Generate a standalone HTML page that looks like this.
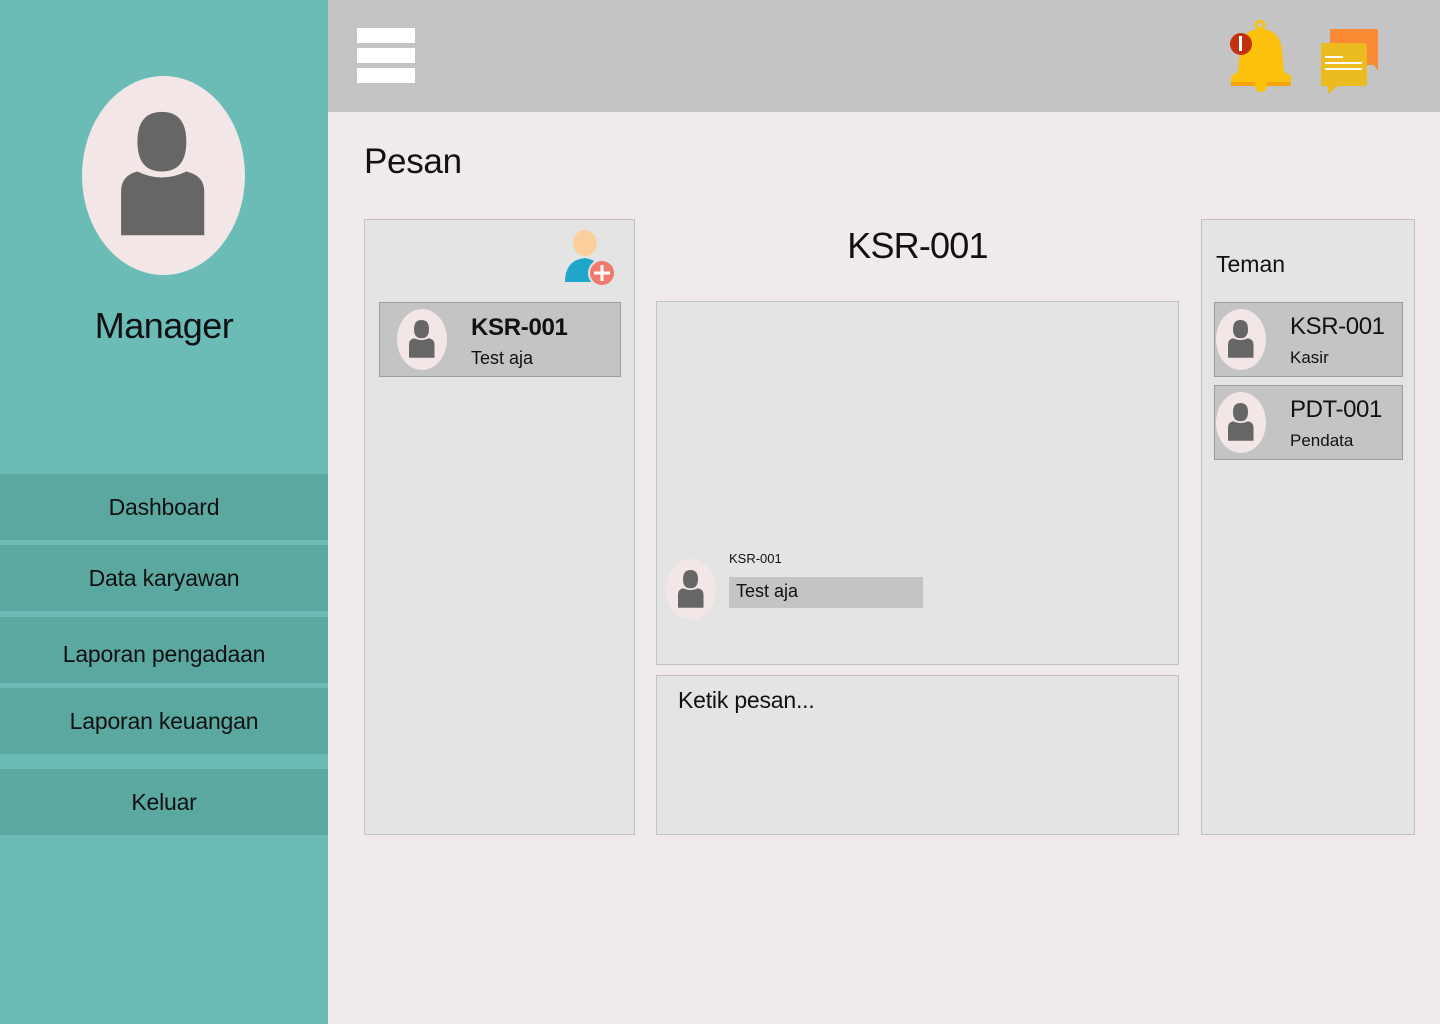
<!DOCTYPE html>
<html><head><meta charset="utf-8"><style>
*{margin:0;padding:0;box-sizing:border-box}
body{width:1440px;height:1024px;position:relative;background:#f0ebea;font-family:"Liberation Sans",Roboto,sans-serif;overflow:hidden;color:#111}
.abs{position:absolute}
.side{left:0;top:0;width:328px;height:1024px;background:#6bbcb7}
.menu{left:0;width:328px;height:66px;background:#5ba8a0;font-size:23px;text-align:center;color:#111;letter-spacing:-0.2px}
.top{left:328px;top:0;width:1112px;height:112px;background:#c4c4c4}
.panel{background:#e4e4e4;border:1px solid #c2c2c2}
.item{background:#c4c4c4;border:1px solid #9c9c9c}
</style></head><body>
<svg width="0" height="0" style="position:absolute"><defs>
<symbol id="av" viewBox="0 0 100 100"><ellipse cx="50" cy="50" rx="50" ry="50" fill="#f2e6e6"/><path d="M34 33 Q34 18 49 18 Q64 18 64 33 Q64 48 49 48 Q34 48 34 33Z" fill="#666"/><path d="M24 80 V58 Q24 50 34 48 Q49 54 64 48 Q75 50 75 58 V80 Z" fill="#666"/></symbol>
</defs></svg>
<div class="abs side"></div>
<svg class="abs" style="left:82px;top:76px" width="163" height="199" viewBox="0 0 100 100" preserveAspectRatio="none"><use href="#av"/></svg>
<div class="abs" style="left:0;width:328px;top:305px;text-align:center;font-size:36px;letter-spacing:-0.5px">Manager</div>
<div class="abs menu" style="top:474px;line-height:66px">Dashboard</div>
<div class="abs menu" style="top:545px;line-height:66px">Data karyawan</div>
<div class="abs menu" style="top:617px;line-height:74px">Laporan pengadaan</div>
<div class="abs menu" style="top:688px;line-height:66px">Laporan keuangan</div>
<div class="abs menu" style="top:769px;line-height:66px">Keluar</div>
<div class="abs top"></div>
<div class="abs" style="left:357px;top:28px;width:58px;height:15px;background:#fff"></div>
<div class="abs" style="left:357px;top:48px;width:58px;height:15px;background:#fff"></div>
<div class="abs" style="left:357px;top:68px;width:58px;height:15px;background:#fff"></div>
<svg class="abs" style="left:1228px;top:20px" width="66" height="72" viewBox="0 0 66 72">
<circle cx="32" cy="5" r="4" fill="none" stroke="#fbbf13" stroke-width="3"/>
<path d="M32 9 Q52 9 54 30 L56 52 L63 56 V64 H3 V56 L10 52 L12 30 Q14 9 32 9Z" fill="#fcc10d"/>
<path d="M3 62 H63 V66 H3Z" fill="#f5a50b"/>
<circle cx="33" cy="66" r="6" fill="#fcc10d"/>
<circle cx="13" cy="24" r="11" fill="#c1320e"/>
<rect x="11" y="16" width="3" height="15" fill="#fff"/>
</svg>
<svg class="abs" style="left:1318px;top:27px" width="62" height="68" viewBox="0 0 62 68">
<path d="M12 2 H60 V44 L56 38 H12Z" fill="#fb8a34"/>
<path d="M3 16 H46 Q49 16 49 19 V56 Q49 59 46 59 H20 L10 67 V59 H3Z" fill="#ebbb1f"/>
<rect x="7" y="29" width="18" height="2" fill="#fff"/><rect x="7" y="35" width="37" height="2" fill="#fff"/><rect x="7" y="41" width="37" height="2" fill="#fff"/>
</svg>
<div class="abs" style="left:364px;top:142px;font-size:35px;letter-spacing:-0.3px">Pesan</div>
<div class="abs panel" style="left:364px;top:219px;width:271px;height:616px"></div>
<svg class="abs" style="left:562px;top:230px" width="54" height="55" viewBox="0 0 54 55">
<ellipse cx="23" cy="13" rx="12" ry="13" fill="#fbd09c"/>
<path d="M3 52 Q3 30 23 28 Q40 30 42 52Z" fill="#1fa6c8"/>
<circle cx="40" cy="43" r="13" fill="#f07b6d" stroke="#e4e4e4" stroke-width="2"/>
<rect x="32" y="41.5" width="16" height="3" fill="#fff"/><rect x="38.5" y="35" width="3" height="16" fill="#fff"/>
</svg>
<div class="abs item" style="left:379px;top:302px;width:242px;height:75px"></div>
<svg class="abs" style="left:397px;top:309px" width="50" height="61" viewBox="0 0 100 100" preserveAspectRatio="none"><use href="#av"/></svg>
<div class="abs" style="left:471px;top:314px;font-size:24px;font-weight:bold;letter-spacing:-0.3px">KSR-001</div>
<div class="abs" style="left:471px;top:348px;font-size:18px">Test aja</div>
<div class="abs" style="left:656px;width:523px;top:225px;text-align:center;font-size:36px;letter-spacing:-0.8px">KSR-001</div>
<div class="abs panel" style="left:656px;top:301px;width:523px;height:364px"></div>
<svg class="abs" style="left:666px;top:559px" width="50" height="61" viewBox="0 0 100 100" preserveAspectRatio="none"><use href="#av"/></svg>
<div class="abs" style="left:729px;top:551px;font-size:13px">KSR-001</div>
<div class="abs" style="left:729px;top:577px;width:194px;height:31px;background:#c4c4c4;font-size:18px;padding:4px 7px">Test aja</div>
<div class="abs panel" style="left:656px;top:675px;width:523px;height:160px"></div>
<div class="abs" style="left:678px;top:687px;font-size:23px;letter-spacing:-0.2px">Ketik pesan...</div>
<div class="abs panel" style="left:1201px;top:219px;width:214px;height:616px"></div>
<div class="abs" style="left:1216px;top:251px;font-size:23px">Teman</div>
<div class="abs item" style="left:1214px;top:302px;width:189px;height:75px"></div>
<svg class="abs" style="left:1216px;top:309px" width="50" height="61" viewBox="0 0 100 100" preserveAspectRatio="none"><use href="#av"/></svg>
<div class="abs" style="left:1290px;top:313px;font-size:24px;letter-spacing:-0.4px">KSR-001</div>
<div class="abs" style="left:1290px;top:348px;font-size:17px">Kasir</div>
<div class="abs item" style="left:1214px;top:385px;width:189px;height:75px"></div>
<svg class="abs" style="left:1216px;top:392px" width="50" height="61" viewBox="0 0 100 100" preserveAspectRatio="none"><use href="#av"/></svg>
<div class="abs" style="left:1290px;top:396px;font-size:24px;letter-spacing:-0.4px">PDT-001</div>
<div class="abs" style="left:1290px;top:431px;font-size:17px">Pendata</div>
</body></html>
